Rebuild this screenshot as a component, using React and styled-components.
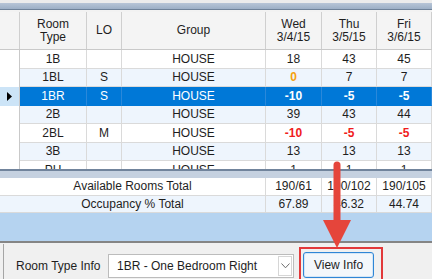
import React from "react";
import styled, { createGlobalStyle } from "styled-components";

const GlobalStyle = createGlobalStyle`
  html, body {
    margin: 0;
    padding: 0;
  }
  body {
    font-family: "Liberation Sans", Arial, sans-serif;
    font-size: 12px;
    color: #1e1e1e;
    background: #f0f0f0;
  }
`;

const GRID_COLS = "20px 67px 35px 144px 56px 55px 1fr";
const TOTAL_COLS = "266px 56px 55px 1fr";

// room rows shown in the grid (last one is cut off by the splitter)
const rooms = [
  { type: "1B", lo: "", vals: [["18"], ["43"], ["45"]] },
  { type: "1BL", lo: "S", vals: [["0", "orange"], ["7"], ["7"]] },
  { type: "1BR", lo: "S", selected: true, vals: [["-10", "bold"], ["-5", "bold"], ["-5", "bold"]] },
  { type: "2B", lo: "", vals: [["39"], ["43"], ["44"]] },
  { type: "2BL", lo: "M", vals: [["-10", "red"], ["-5", "red"], ["-5", "red"]] },
  { type: "3B", lo: "", vals: [["13"], ["13"], ["13"]] },
  { type: "PH", lo: "", vals: [["1"], ["1"], ["1"]] },
];

const totals = [
  { label: "Available Rooms Total", vals: ["190/61", "190/102", "190/105"] },
  { label: "Occupancy % Total", vals: ["67.89", "46.32", "44.74"] },
];

const App = () => {
  return (
    <>
      <GlobalStyle />
      <Screen>
        <TopStrip />
        <HeaderRow>
          <HeaderCell />
          <HeaderCell>Room<br />Type</HeaderCell>
          <HeaderCell>LO</HeaderCell>
          <HeaderCell>Group</HeaderCell>
          <HeaderCell>Wed<br />3/4/15</HeaderCell>
          <HeaderCell>Thu<br />3/5/15</HeaderCell>
          <HeaderCell>Fri<br />3/6/15</HeaderCell>
        </HeaderRow>
        <GridBody>
          {rooms.map((r, i) => (
            <DataRow key={r.type} $alt={i % 2 === 1} $selected={r.selected}>
              <RowHeader $selected={r.selected}>
                {r.selected && (
                  <svg width="5" height="9" viewBox="0 0 5 9">
                    <polygon points="0,0 5,4.5 0,9" fill="#000" />
                  </svg>
                )}
              </RowHeader>
              <Cell $selected={r.selected}>{r.type}</Cell>
              <Cell $selected={r.selected}>{r.lo}</Cell>
              <Cell $selected={r.selected}>HOUSE</Cell>
              {r.vals.map(([v, tone], j) => (
                <Cell key={j} $selected={r.selected} $tone={tone}>
                  {v}
                </Cell>
              ))}
            </DataRow>
          ))}
        </GridBody>
        <Splitter />
        {totals.map((t, i) => (
          <TotalRow key={t.label} $alt={i === 1}>
            <TotalCell>{t.label}</TotalCell>
            {t.vals.map((v) => (
              <TotalCell key={v}>{v}</TotalCell>
            ))}
          </TotalRow>
        ))}
        <Filler />
        <Toolbar>
          <Frame>
            <FieldLabel>Room Type Info</FieldLabel>
            <Combo>
              <ComboText>1BR - One Bedroom Right</ComboText>
              <ComboButton>
                <svg width="9" height="6" viewBox="0 0 9 6">
                  <polyline points="0.5,0.5 4.5,4.8 8.5,0.5" fill="none" stroke="#6d6d6d" strokeWidth="1" />
                </svg>
              </ComboButton>
            </Combo>
            <Highlight>
              <ViewButton>View Info</ViewButton>
            </Highlight>
          </Frame>
        </Toolbar>
        <Arrow width="36" height="92" viewBox="0 0 36 92">
          <line x1="18" y1="7" x2="18" y2="64" stroke="#e5453b" strokeWidth="7" strokeLinecap="round" />
          <polygon points="4,62 32,62 18,90" fill="#e5453b" />
        </Arrow>
      </Screen>
    </>
  );
};

export default App;

const Screen = styled.div`
  position: relative;
  width: 432px;
  height: 279px;
  overflow: hidden;
  display: flex;
  flex-direction: column;
  background: #f0f0f0;
`;

const TopStrip = styled.div`
  flex: none;
  height: 12px;
  background: linear-gradient(
    to bottom,
    #ececec 0 3px,
    #b7c5d7 3px,
    #9cafc6 9px,
    #6f8299 9px 10px,
    #f2f2f2 10px
  );
`;

const HeaderRow = styled.div`
  flex: none;
  display: grid;
  grid-template-columns: ${GRID_COLS};
  height: 38px;
  background: #f4f4f4;
  border-bottom: 1px solid #c9c9c9;
  box-sizing: border-box;
`;

const HeaderCell = styled.div`
  display: flex;
  align-items: center;
  justify-content: center;
  text-align: center;
  line-height: 13px;
  border-right: 1px solid #cfcfcf;
  color: #1e1e1e;
`;

const GridBody = styled.div`
  flex: none;
  height: 119px;
  overflow: hidden;
  background: #fff;
`;

const DataRow = styled.div`
  display: grid;
  grid-template-columns: ${GRID_COLS};
  height: 18.5px;
  background: ${(p) => (p.$selected ? "#0078d7" : p.$alt ? "#eef5fd" : "#fff")};
`;

const RowHeader = styled.div`
  display: flex;
  align-items: center;
  padding-left: 7px;
  background: ${(p) => (p.$selected ? "#cce4f7" : "#fff")};
  border-right: 1px solid #c9c9c9;
`;

const toneColor = {
  orange: "#f5a10f",
  red: "#f01c1c",
};

const Cell = styled.div`
  display: flex;
  align-items: center;
  justify-content: center;
  box-sizing: border-box;
  border-right: 1px solid ${(p) => (p.$selected ? "#2a88da" : "#dadada")};
  border-bottom: 1px solid ${(p) => (p.$selected ? "#0078d7" : "#dadada")};
  color: ${(p) => (p.$selected ? "#fff" : toneColor[p.$tone] || "#1e1e1e")};
  font-weight: ${(p) => (p.$tone ? 700 : 400)};
  white-space: nowrap;
`;

const Splitter = styled.div`
  flex: none;
  height: 9px;
  box-sizing: border-box;
  border-top: 2px solid #71849c;
  background: #c5d1e0;
`;

const TotalRow = styled.div`
  flex: none;
  display: grid;
  grid-template-columns: ${TOTAL_COLS};
  height: 17.5px;
  background: ${(p) => (p.$alt ? "#eef5fd" : "#fff")};
`;

const TotalCell = styled.div`
  display: flex;
  align-items: center;
  justify-content: center;
  box-sizing: border-box;
  border-right: 1px solid #dadada;
  border-bottom: 1px solid #dadada;
  white-space: nowrap;
`;

const Filler = styled.div`
  flex: 1;
  background: #b5d3f0;
`;

const Toolbar = styled.div`
  flex: none;
  height: 38px;
  display: flex;
  padding-left: 3px;
  box-sizing: border-box;
  border-top: 2px solid #858585;
  background: #f0f0f0;
`;

const Frame = styled.div`
  flex: 1;
  display: flex;
  align-items: flex-start;
  padding-left: 12px;
  margin-top: 1px;
  border-left: 1px solid #a5a5a5;
`;

const FieldLabel = styled.div`
  margin-top: 10px;
  line-height: 24px;
  width: 92px;
  white-space: nowrap;
`;

const Combo = styled.div`
  margin-top: 10px;
  width: 186px;
  height: 24px;
  box-sizing: border-box;
  display: flex;
  align-items: center;
  border: 1px solid #bcbcbc;
  background: #fff;
  padding: 1px;
`;

const ComboText = styled.div`
  flex: 1;
  padding-left: 7px;
  white-space: nowrap;
`;

const ComboButton = styled.div`
  width: 14px;
  height: 100%;
  box-sizing: border-box;
  display: flex;
  align-items: center;
  justify-content: center;
  border: 1px solid #d6d6d6;
  background: #fff;
`;

const Highlight = styled.div`
  margin-left: 5px;
  margin-top: 3px;
  width: 84px;
  height: 40px;
  box-sizing: border-box;
  padding: 3px 0 0 2px;
  border: 2px solid #e2383a;
`;

const ViewButton = styled.button`
  width: 71px;
  height: 26px;
  padding: 0;
  font-family: inherit;
  font-size: 12px;
  color: #1e1e1e;
  background: #f3f7fb;
  border: 1px solid #2f86d6;
  border-radius: 3px;
  box-shadow: inset 0 0 0 1px #d3e6f7;
`;

const Arrow = styled.svg`
  position: absolute;
  left: 319px;
  top: 158px;
`;
